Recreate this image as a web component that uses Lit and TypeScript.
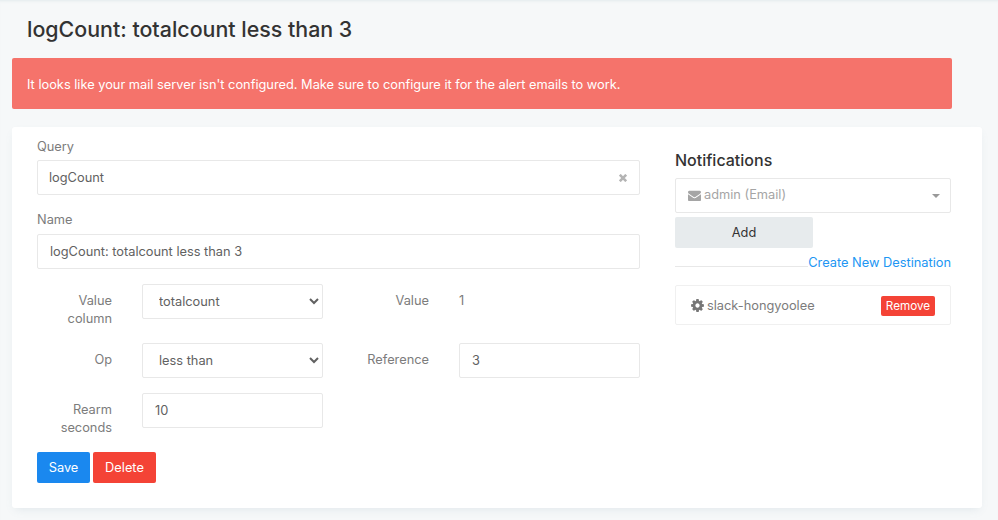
import { LitElement, html, css } from "lit";
import { customElement } from "lit/decorators.js";

@customElement("app-root")
export class AppRoot extends LitElement {
  static styles = css`
    :host {
      display: block;
      width: 998px;
      height: 520px;
      overflow: hidden;
      background: #f6f8f9;
      font-family: Inter, "Liberation Sans", sans-serif;
      font-size: 12.8px;
      line-height: 18px;
      color: #7c7c7c;
      box-shadow: inset 0 3px 3px -2px rgba(102, 136, 153, 0.12);
    }
    * { box-sizing: border-box; }
    .page { padding: 16px 16px 0 12px; }
    h1 {
      margin: 0 0 16px 15px;
      font-size: 21.4px;
      line-height: 26px;
      font-weight: 500;
      color: #333;
    }
    .alert {
      width: 940px;
      height: 51px;
      margin-bottom: 18px;
      padding: 2px 15px 0;
      display: flex;
      align-items: center;
      background: #f5736b;
      color: #fff;
      border-radius: 2px;
    }
    .card {
      width: 970px;
      height: 381px;
      background: #fff;
      border-radius: 3px;
      box-shadow: 0 4px 9px -3px rgba(102, 136, 153, 0.15);
      padding: 11px 31px 0 25px;
      display: flex;
      gap: 35px;
    }
    .left { width: 603px; display: flex; flex-direction: column; }
    .right { width: 276px; padding-top: 12px; display: flex; flex-direction: column; }
    label { display: block; }
    .query-label { margin-bottom: 4px; }
    .name-label { margin-bottom: 5px; }
    .control {
      display: block;
      width: 100%;
      height: 35px;
      border: 1px solid #e8e8e8;
      border-radius: 2px;
      background: #fff;
      font: inherit;
      color: #616161;
      padding: 0 12px 1px;
      margin: 0;
    }
    .query {
      display: flex;
      align-items: center;
      justify-content: space-between;
      margin-bottom: 16px;
      padding: 0 12px 0 11px;
    }
    .clear { stroke: #b4b4b4; stroke-width: 2.6; }
    .name { margin-bottom: 15px; }
    .grid {
      display: grid;
      grid-template-columns: 75px 181px 76px 181px;
      column-gap: 30px;
      row-gap: 15px;
      align-items: start;
      margin-bottom: 15px;
    }
    .grid label { text-align: right; padding-top: 8px; }
    .static { padding-top: 8px; color: #7c7c7c; }
    .buttons { display: flex; gap: 3px; }
    button {
      font: inherit;
      border: 0;
      border-radius: 2px;
      color: #fff;
      height: 31px;
      margin: 0;
      padding: 0;
    }
    .save { width: 53px; background: #1a88ef; }
    .delete { width: 63px; background: #f44336; }
    h2 {
      margin: 0 0 8px;
      font-size: 16px;
      line-height: 20px;
      font-weight: 500;
      color: #333;
    }
    .picker {
      display: flex;
      align-items: center;
      gap: 3px;
      color: #a5a5a5;
    }
    .picker svg { fill: #a5a5a5; }
    .caret {
      margin: 2px -2px 0 auto;
      width: 0;
      height: 0;
      border-left: 4px solid transparent;
      border-right: 4px solid transparent;
      border-top: 4px solid #999;
    }
    .add {
      width: 138px;
      background: #e7ebed;
      color: #333;
      margin-top: 4px;
      display: block;
    }
    .create {
      display: flex;
      align-items: center;
      margin-top: 6px;
      height: 18px;
    }
    .rule { flex: 1; height: 1px; background: #e8e8e8; margin-top: 6px; }
    a { color: #2196f3; text-decoration: none; white-space: nowrap; }
    .item {
      margin-top: 13px;
      height: 40px;
      border: 1px solid #f0f0f0;
      border-radius: 2px;
      display: flex;
      align-items: center;
      padding: 2px 15px 0 14px;
      gap: 2px;
    }
    .item svg { fill: #767676; margin-top: -1px; }
    .remove {
      margin-left: auto;
      width: 54px;
      height: 20px;
      font-size: 11.7px;
      line-height: 20px;
      background: #f44336;
    }
  `;

  render() {
    return html`
      <div class="page">
        <h1>logCount: totalcount less than 3</h1>
        <div class="alert">It looks like your mail server isn't configured. Make sure to configure it for the alert emails to work.</div>
        <div class="card">
          <div class="left">
            <label class="query-label">Query</label>
            <div class="control query">
              <span>logCount</span>
              <svg class="clear" width="8" height="8" viewBox="0 0 8 8"><path d="M0.8 0.8 7.2 7.2M7.2 0.8 0.8 7.2"/></svg>
            </div>
            <label class="name-label">Name</label>
            <input class="control name" .value=${"logCount: totalcount less than 3"} />
            <div class="grid">
              <label>Value column</label>
              <select class="control"><option>totalcount</option></select>
              <label>Value</label>
              <div class="static">1</div>
              <label>Op</label>
              <select class="control"><option>less than</option></select>
              <label>Reference</label>
              <input class="control" .value=${"3"} />
              <label>Rearm seconds</label>
              <input class="control" .value=${"10"} />
            </div>
            <div class="buttons">
              <button class="save">Save</button>
              <button class="delete">Delete</button>
            </div>
          </div>
          <div class="right">
            <h2>Notifications</h2>
            <div class="control picker">
              <svg width="13" height="13" viewBox="0 0 1792 1792"><path d="M1792 710v794q0 66-47 113t-113 47h-1472q-66 0-113-47t-47-113v-794q44 49 101 87 362 246 497 345 57 42 92.500 65.500t94.500 48 110 24.500h2q51 0 110-24.500t94.500-48 92.500-65.500q170-123 498-345 57-39 100-87zm0-294q0 79-49 151t-122 123q-376 261-468 325-10 7-42.500 30.500t-54 38-52 32.500-57.500 27-50 9h-2q-23 0-50-9t-57.500-27-52-32.500-54-38-42.500-30.500q-91-64-262-182.500t-205-142.500q-62-42-117-115.500t-55-136.500q0-78 41.500-130t118.500-52h1472q65 0 112.500 47t47.500 113z"/></svg>
              <span>admin (Email)</span>
              <span class="caret"></span>
            </div>
            <button class="add">Add</button>
            <div class="create"><div class="rule"></div><a>Create New Destination</a></div>
            <div class="item">
              <svg width="15" height="15" viewBox="0 0 1792 1792"><path d="M1152 896q0-106-75-181t-181-75-181 75-75 181 75 181 181 75 181-75 75-181zm512-109v222q0 12-8 23t-20 13l-185 28q-19 54-39 91 35 50 107 138 10 12 10 25t-9 23q-27 37-99 108t-94 71q-12 0-26-9l-138-108q-44 23-91 38-16 136-29 186-7 28-36 28h-222q-14 0-24.500-8.500t-11.500-21.500l-28-184q-49-16-90-37l-141 107q-10 9-25 9-14 0-25-11-126-114-165-168-7-10-7-23 0-12 8-23 15-21 51-66.500t54-70.500q-27-50-41-99l-183-27q-13-2-21-12.500t-8-23.500v-222q0-12 8-23t19-13l186-28q14-46 39-92-40-57-107-138-10-12-10-24 0-10 9-23 26-36 98.500-107.500t94.500-71.500q13 0 26 10l138 107q44-23 91-38 16-136 29-186 7-28 36-28h222q14 0 24.500 8.500t11.500 21.500l28 184q49 16 90 37l142-107q9-9 24-9 13 0 25 10 129 119 165 170 7 8 7 22 0 12-8 23-15 21-51 66.500t-54 70.500q26 50 41 98l183 28q13 2 21 12.500t8 23.500z"/></svg>
              <span>slack-hongyoolee</span>
              <button class="remove">Remove</button>
            </div>
          </div>
        </div>
      </div>
    `;
  }
}
